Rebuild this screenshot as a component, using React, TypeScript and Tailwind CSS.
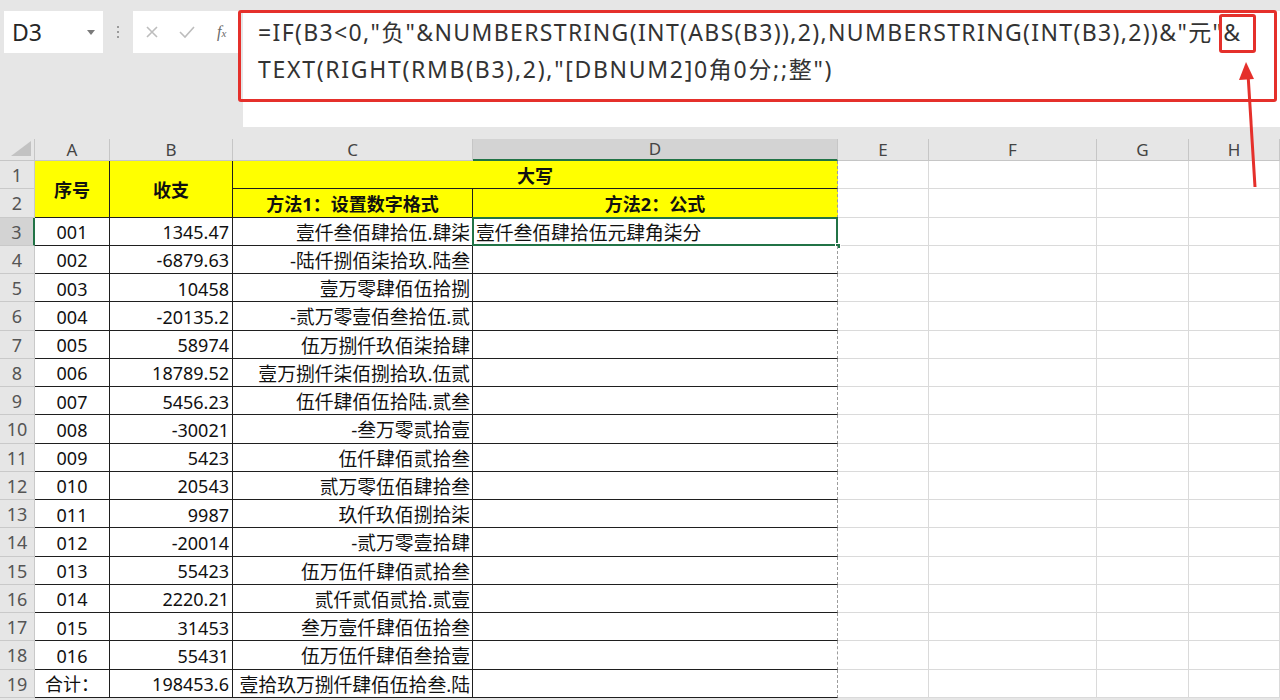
import React from 'react';

type Row = {
  no: string;
  amount: string;
  upper: string;
  formula?: string;
};

const rows: Row[] = [
  { no: '001', amount: '1345.47', upper: '壹仟叁佰肆拾伍.肆柒', formula: '壹仟叁佰肆拾伍元肆角柒分' },
  { no: '002', amount: '-6879.63', upper: '-陆仟捌佰柒拾玖.陆叁' },
  { no: '003', amount: '10458', upper: '壹万零肆佰伍拾捌' },
  { no: '004', amount: '-20135.2', upper: '-贰万零壹佰叁拾伍.贰' },
  { no: '005', amount: '58974', upper: '伍万捌仟玖佰柒拾肆' },
  { no: '006', amount: '18789.52', upper: '壹万捌仟柒佰捌拾玖.伍贰' },
  { no: '007', amount: '5456.23', upper: '伍仟肆佰伍拾陆.贰叁' },
  { no: '008', amount: '-30021', upper: '-叁万零贰拾壹' },
  { no: '009', amount: '5423', upper: '伍仟肆佰贰拾叁' },
  { no: '010', amount: '20543', upper: '贰万零伍佰肆拾叁' },
  { no: '011', amount: '9987', upper: '玖仟玖佰捌拾柒' },
  { no: '012', amount: '-20014', upper: '-贰万零壹拾肆' },
  { no: '013', amount: '55423', upper: '伍万伍仟肆佰贰拾叁' },
  { no: '014', amount: '2220.21', upper: '贰仟贰佰贰拾.贰壹' },
  { no: '015', amount: '31453', upper: '叁万壹仟肆佰伍拾叁' },
  { no: '016', amount: '55431', upper: '伍万伍仟肆佰叁拾壹' },
  { no: '合计：', amount: '198453.6', upper: '壹拾玖万捌仟肆佰伍拾叁.陆' },
];

const font = "font-['Noto_Sans','Noto_Sans_CJK_SC',sans-serif]";

// table cells A-D
const tb = 'border-r border-b border-[#1f1f1f] flex items-center pt-[3px] text-[#111] overflow-visible whitespace-nowrap';
// cells E-H
const gb = 'border-r border-b border-[#dadada] bg-white';
const rowHead = 'border-b border-r border-[#c9c9c9] flex items-center justify-center pt-[2px] text-[18px] text-[#555] bg-[#e6e6e6]';
const colHead = 'border-r border-b border-[#c6c6c6] flex items-center justify-center text-[17px] text-[#444] bg-[#e6e6e6]';
const dRight = '[border-right-style:dashed] border-r-[#9c9c9c]';

function EmptyCols() {
  return (
    <>
      <div className={gb} />
      <div className={gb} />
      <div className={gb} />
      <div className={gb} />
    </>
  );
}

export default function App() {
  return (
    <div className={`relative h-[700px] w-[1280px] overflow-hidden bg-[#e6e6e6] ${font}`}>
      {/* formula bar */}
      <div className="flex h-[139px] items-start pl-[4px] pt-[11px]">
        <div className="flex h-[42px] w-[99px] items-center justify-between bg-white pl-[8px] pr-[8px]">
          <span className="text-[23px] text-[#262626]">D3</span>
          <svg width="8" height="5" viewBox="0 0 8 5">
            <path d="M0 0 L8 0 L4 5 Z" fill="#7a7a7a" />
          </svg>
        </div>
        <div className="flex h-[42px] w-[30px] items-center justify-center">
          <div className="flex flex-col gap-[3px]">
            <span className="h-[2px] w-[2px] bg-[#9a9a9a]" />
            <span className="h-[2px] w-[2px] bg-[#9a9a9a]" />
            <span className="h-[2px] w-[2px] bg-[#9a9a9a]" />
          </div>
        </div>
        <div className="flex h-[42px] w-[107px] items-center bg-white pl-[12px]">
          <svg width="14" height="14" viewBox="0 0 14 14" className="mr-[20px]">
            <path d="M2 2 L12 12 M12 2 L2 12" stroke="#bdbdbd" strokeWidth="1.6" />
          </svg>
          <svg width="16" height="14" viewBox="0 0 16 14" className="mr-[22px]">
            <path d="M1 7 L6 12 L15 2" stroke="#bdbdbd" strokeWidth="1.6" fill="none" />
          </svg>
          <span className="font-['Liberation_Serif',serif] text-[16px] italic text-[#6a6a6a]">
            f<span className="text-[11px]">x</span>
          </span>
        </div>
        <div className="ml-[3px] h-[116px] flex-1 bg-white pl-[15px] pt-[3px] text-[23px] leading-[37px] text-[#333]">
          <div className="whitespace-nowrap tracking-[1.35px]">=IF(B3&lt;0,"负"&amp;NUMBERSTRING(INT(ABS(B3)),2),NUMBERSTRING(INT(B3),2))&amp;"元"&amp;</div>
          <div className="whitespace-nowrap tracking-[1.7px]">TEXT(RIGHT(RMB(B3),2),"[DBNUM2]0角0分;;整")</div>
        </div>
      </div>

      {/* annotation: red frames + arrow */}
      <div className="pointer-events-none absolute left-[238px] top-[10px] h-[92px] w-[1039px] rounded-[3px] border-[3px] border-[#e5302b]" />
      <div className="pointer-events-none absolute left-[1219px] top-[14px] h-[39px] w-[37px] rounded-[3px] border-[3px] border-[#e5302b]" />
      <svg className="pointer-events-none absolute left-[1236px] top-[60px]" width="30" height="132" viewBox="0 0 30 132">
        <path d="M19 127 L12 14" stroke="#e5302b" strokeWidth="3" fill="none" />
        <path d="M10 2 L3 20 L18 19 Z" fill="#e5302b" />
      </svg>

      {/* sheet grid */}
      <div className="grid grid-cols-[35px_75px_123px_240px_365px_91px_168px_92px_91px] grid-rows-[22px_repeat(19,28.25px)]">
        {/* column headers */}
        <div className="flex items-end justify-end border-r border-b border-[#c6c6c6] bg-[#e6e6e6] pb-[4px] pr-[3px]">
          <svg width="20" height="15" viewBox="0 0 20 15">
            <path d="M20 0 L20 15 L0 15 Z" fill="#c2c2c2" />
          </svg>
        </div>
        <div className={colHead}>A</div>
        <div className={colHead}>B</div>
        <div className={colHead}>C</div>
        <div className="flex items-center justify-center border-r border-b-2 border-r-[#c6c6c6] border-b-[#217346] bg-[#d3d3d3] text-[17px] text-[#444]">D</div>
        <div className={colHead}>E</div>
        <div className={colHead}>F</div>
        <div className={colHead}>G</div>
        <div className={colHead}>H</div>

        {/* row 1 */}
        <div className={rowHead}>1</div>
        <div className={`${tb} row-span-2 justify-center bg-[#ffff00] pt-0 text-[18px] font-bold`}>序号</div>
        <div className={`${tb} row-span-2 justify-center bg-[#ffff00] pt-0 text-[18px] font-bold`}>收支</div>
        <div className={`${tb} col-span-2 justify-center bg-[#ffff00] text-[18px] font-bold ${dRight}`}>大写</div>
        <EmptyCols />

        {/* row 2 */}
        <div className={rowHead}>2</div>
        <div className={`${tb} justify-center bg-[#ffff00] text-[18px] font-bold`}>方法1：设置数字格式</div>
        <div className={`${tb} justify-center bg-[#ffff00] text-[18px] font-bold ${dRight}`}>方法2：公式</div>
        <EmptyCols />

        {rows.map((r, i) => {
          const selected = i === 0;
          return (
            <React.Fragment key={r.no}>
              <div
                className={
                  selected
                    ? 'flex items-center justify-center border-b border-r-2 border-b-[#c9c9c9] border-r-[#217346] bg-[#d3d3d3] pt-[2px] text-[18px] text-[#555]'
                    : rowHead
                }
              >
                {i + 3}
              </div>
              <div className={`${tb} justify-center bg-white text-[18px]`}>{r.no}</div>
              <div className={`${tb} justify-end bg-white pr-[3px] text-[18px]`}>{r.amount}</div>
              <div className={`${tb} justify-end bg-white pr-[2px] text-[18.8px]`}>{r.upper}</div>
              <div className={`${tb} relative bg-white pl-[3px] text-[18.8px] ${dRight}`}>
                {r.formula}
                {selected && (
                  <>
                    <div className="pointer-events-none absolute -left-[1px] -top-[1px] h-[calc(100%+2px)] w-[calc(100%+2px)] border-2 border-[#217346]" />
                    <div className="absolute -bottom-[4px] -right-[4px] h-[6px] w-[6px] border border-white bg-[#217346]" />
                  </>
                )}
              </div>
              <EmptyCols />
            </React.Fragment>
          );
        })}
      </div>
    </div>
  );
}
